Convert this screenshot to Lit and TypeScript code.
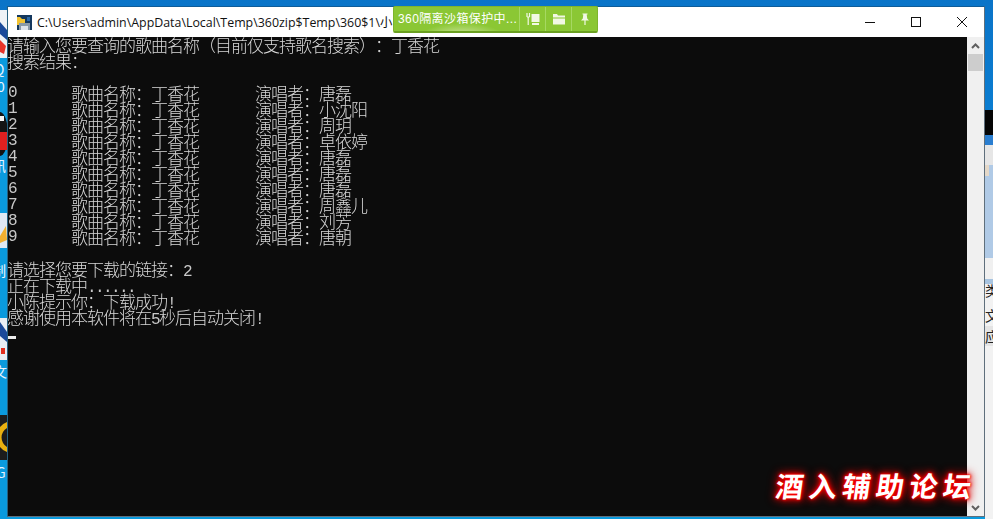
import { LitElement, html, css } from "lit";
import { customElement } from "lit/decorators.js";

const SINGERS = ["唐磊", "小沈阳", "周玥", "卓依婷", "唐磊", "唐磊", "唐磊", "周鑫儿", "刘芳", "唐朝"];

@customElement("app-root")
export class AppRoot extends LitElement {
  static styles = css`
    :host { display: block; position: relative; width: 993px; height: 519px; overflow: hidden;
      background: linear-gradient(#0a74c8, #0a84d8 40%, #0a9ade); font-family: "Liberation Sans", "Noto Sans CJK SC", sans-serif; }
    .bg { position: absolute; inset: 0; }
    .bg text { font-family: "Noto Sans CJK SC", sans-serif; font-size: 14px; }
    .win { position: absolute; left: 7px; top: 6px; width: 978px; height: 511px; box-sizing: border-box;
      display: flex; flex-direction: column; border: 1px solid #5f6f7c; border-top-color: #0f5c98; border-left-color: #26607f; }
    .title { height: 30px; background: #fff; display: flex; align-items: center; flex: none; }
    .ticon { width: 15px; height: 15px; margin-left: 9px; flex: none; }
    .ttext { margin-left: 5px; font-family: "Open Sans", "Noto Sans CJK SC", sans-serif; font-size: 12.4px; color: #111; white-space: pre; flex: 1; overflow: hidden; }
    .wbtn { width: 46px; height: 30px; box-sizing: border-box; padding-left: 2px; display: flex; align-items: center; justify-content: center; flex: none; }
    .wbtn svg { width: 12px; height: 12px; }
    .body { flex: 1; display: flex; min-height: 0; }
    .console { flex: 1; background: #0c0c0c; overflow: hidden; }
    .text { will-change: transform; margin-left: -1px; color: #d8d8d8; font-family: "Noto Sans CJK SC", sans-serif; font-weight: 300; font-size: 17px; letter-spacing: -1px; line-height: 16px; text-spacing-trim: space-all; font-kerning: none; }
    .ln { height: 16px; white-space: pre; }
    .row { height: 16px; display: grid; grid-template-columns: 64px 184px auto; justify-content: start; white-space: pre; }
    .a { font-family: "Liberation Mono", monospace; font-size: 16px; letter-spacing: -1.6px; color: #c8c8c8; }
    .row .a { margin-left: 1px; }
    .cursor { width: 8px; height: 3px; margin-top: 11px; background: #ececec; }
    .sb { width: 17px; background: #f0f0f0; flex: none; display: flex; flex-direction: column; align-items: center; }
    .arr { height: 17px; display: flex; align-items: center; justify-content: center; flex: none; }
    .arr svg { width: 9px; height: 6px; }
    .thumb { width: 15px; height: 17px; background: #cdcdcd; flex: none; }
    .sp { flex: 1; }
    .badge { position: absolute; left: 393px; top: 6px; width: 205px; height: 27px; box-sizing: border-box; display: flex; align-items: stretch;
      background: radial-gradient(ellipse 42px 14px at 68px 30px, #d4e8a8, rgba(140,200,50,0) 100%), #8bc734;
      border: 1px solid #7eb52d; border-bottom: 2px solid #6aa020; border-radius: 2px; color: #fff; }
    .btext { width: 127px; font-size: 12px; letter-spacing: 0.4px; padding-left: 4px; line-height: 25px; white-space: pre; overflow: hidden; box-sizing: border-box; }
    .bb { width: 26px; flex: none; border-left: 1px solid #a6d862; box-sizing: border-box; display: flex; align-items: center; justify-content: center; }
    .bb svg { width: 14px; height: 14px; }
    .mark { position: absolute; left: 776px; top: 466px; width: 202px; font-family: "Noto Sans CJK SC", sans-serif; font-weight: 700; font-size: 28px; line-height: 38px; letter-spacing: 5.5px;
      color: #fff; white-space: pre; transform: skewX(-8deg);
      text-shadow: 0 0 2px #ff0000, 0 0 3px #ff0000, 0 0 5px #ff0000, 0 0 8px #e00000, 0 0 11px #c00000; }
  `;

  render() {
    return html`
      <svg class="bg" width="993" height="519" viewBox="0 0 993 519">
        <rect x="0" y="58" width="7" height="461" fill="#0a9ade"/>
        <rect x="0" y="10" width="7" height="48" fill="#eef2f6"/>
        <path d="M0 22 L7 30 L7 40 L0 34Z" fill="#1a4a9a"/>
        <path d="M0 40 L6 46 L4 54 L0 52Z" fill="#e8342a"/>
        <text x="-6" y="75" fill="#e8f4ff">Q</text>
        <text x="-3" y="92" fill="#e8f4ff">0</text>
        <ellipse cx="0" cy="134" rx="8" ry="22" fill="#141414"/>
        <rect x="0" y="132" width="7" height="18" fill="#e02020"/>
        <rect x="0" y="116" width="4" height="5" fill="#f4f4f4"/>
        <text x="-8" y="171" fill="#e8f4ff">讯</text>
        <rect x="0" y="213" width="7" height="35" fill="#dfe8f2"/>
        <path d="M0 236 L6 226 L7 240 L0 243Z" fill="#f0b030"/>
        <text x="-8" y="276" fill="#f0f8ff">制</text>
        <rect x="0" y="318" width="7" height="42" fill="#e8eef4"/>
        <path d="M0 322 L7 332 L7 342 L0 336Z" fill="#1a4a9a"/>
        <rect x="1" y="348" width="4" height="6" fill="#e03020"/>
        <text x="-7" y="377" fill="#e8f4ff">文</text>
        <rect x="0" y="415" width="7" height="45" fill="#1c1c1c"/>
        <path d="M7 422 A16 16 0 0 0 7 452 L7 447 A11 11 0 0 1 7 428Z" fill="#e8b010"/>
        <text x="-4" y="478" fill="#e8f4ff">G</text>
        <rect x="985" y="110" width="8" height="25" fill="#050505"/>
        <rect x="985" y="135" width="8" height="10" fill="#2a7ed0"/>
        <rect x="985" y="145" width="8" height="20" fill="#e6e6e6"/>
        <rect x="985" y="165" width="8" height="93" fill="#b0cae6"/>
        <rect x="985" y="165" width="4" height="11" fill="#e4d8c8"/>
        <rect x="985" y="258" width="8" height="21" fill="#f0f0f0"/>
        <rect x="985" y="279" width="8" height="5" fill="#a8c4e0"/>
        <rect x="985" y="284" width="8" height="235" fill="#f2f2f2"/>
        <rect x="985" y="326" width="8" height="20" fill="#e4e4e4"/>
        <text x="985" y="296" fill="#222">类</text>
        <text x="985" y="321" fill="#222">文</text>
        <text x="985" y="342" fill="#222">应</text>
      </svg>
      <div class="win">
        <div class="title">
          <svg class="ticon" viewBox="0 0 15 15">
            <rect x="0" y="0" width="15" height="15" fill="#14385e"/>
            <path d="M0 2 H3 L5 4 H8 V10 H0Z" fill="#f2c230"/>
            <rect x="2" y="8" width="11" height="7" fill="#8a9aa8"/>
            <rect x="4" y="11" width="7" height="4" fill="#dfe4ea"/>
            <rect x="10" y="2" width="3" height="4" fill="#2c6aa8"/>
          </svg>
          <span class="ttext">C:\\Users\\admin\\AppData\\Local\\Temp\\360zip$Temp\\360$1\\小</span>
          <span class="wbtn"><svg viewBox="0 0 12 12"><path d="M1 6.5H11" stroke="#111" fill="none"/></svg></span>
          <span class="wbtn"><svg viewBox="0 0 12 12"><rect x="1.5" y="1.5" width="9" height="9" stroke="#111" fill="none"/></svg></span>
          <span class="wbtn"><svg viewBox="0 0 12 12"><path d="M1 1L11 11M11 1L1 11" stroke="#111" fill="none"/></svg></span>
        </div>
        <div class="body">
          <div class="console">
            <div class="text">
              <div class="ln">请输入您要查询的歌曲名称（目前仅支持歌名搜索）：丁香花</div>
              <div class="ln">搜索结果：</div>
              <div class="ln"></div>
              ${SINGERS.map((s, i) => html`<div class="row"><span class="a">${i}</span><span>歌曲名称：丁香花</span><span>演唱者：${s}</span></div>`)}
              <div class="ln"></div>
              <div class="ln">请选择您要下载的链接：<span class="a">2</span></div>
              <div class="ln">正在下载中<span class="a">......</span></div>
              <div class="ln">小陈提示你：下载成功<span class="a">!</span></div>
              <div class="ln">感谢使用本软件将在<span class="a">5</span>秒后自动关闭<span class="a">!</span></div>
            </div>
            <div class="cursor"></div>
          </div>
          <div class="sb">
            <div class="arr"><svg viewBox="0 0 9 6"><path d="M1 5L4.5 1.5L8 5" stroke="#606060" stroke-width="2" fill="none"/></svg></div>
            <div class="thumb"></div>
            <div class="sp"></div>
            <div class="arr"><svg viewBox="0 0 9 6"><path d="M1 1L4.5 4.5L8 1" stroke="#606060" stroke-width="2" fill="none"/></svg></div>
          </div>
        </div>
      </div>
      <div class="badge">
        <div class="btext">360隔离沙箱保护中...</div>
        <div class="bb"><svg viewBox="0 0 14 14"><path d="M1 1V5M3.5 1V5M1 5H3.5M2.2 5V13" stroke="#f2f8e4" stroke-width="1.2" fill="none"/><rect x="5.5" y="2" width="8" height="8" fill="#f2f8e4"/><rect x="6" y="11" width="7" height="2" fill="#f2f8e4"/></svg></div>
        <div class="bb"><svg viewBox="0 0 14 14"><path d="M1 2H5L6 3.5H13V5.5H1Z M1 6.5H13V12.5H1Z" fill="#f2f8e4"/></svg></div>
        <div class="bb"><svg viewBox="0 0 14 14"><path d="M4.5 1.5H9.5V2.5H8.7L9.2 6.5L11 8.5H7.6V13H6.4V8.5H3L4.8 6.5L5.3 2.5H4.5Z" fill="#f2f8e4"/></svg></div>
      </div>
      <div class="mark">酒入辅助论坛</div>
    `;
  }
}
